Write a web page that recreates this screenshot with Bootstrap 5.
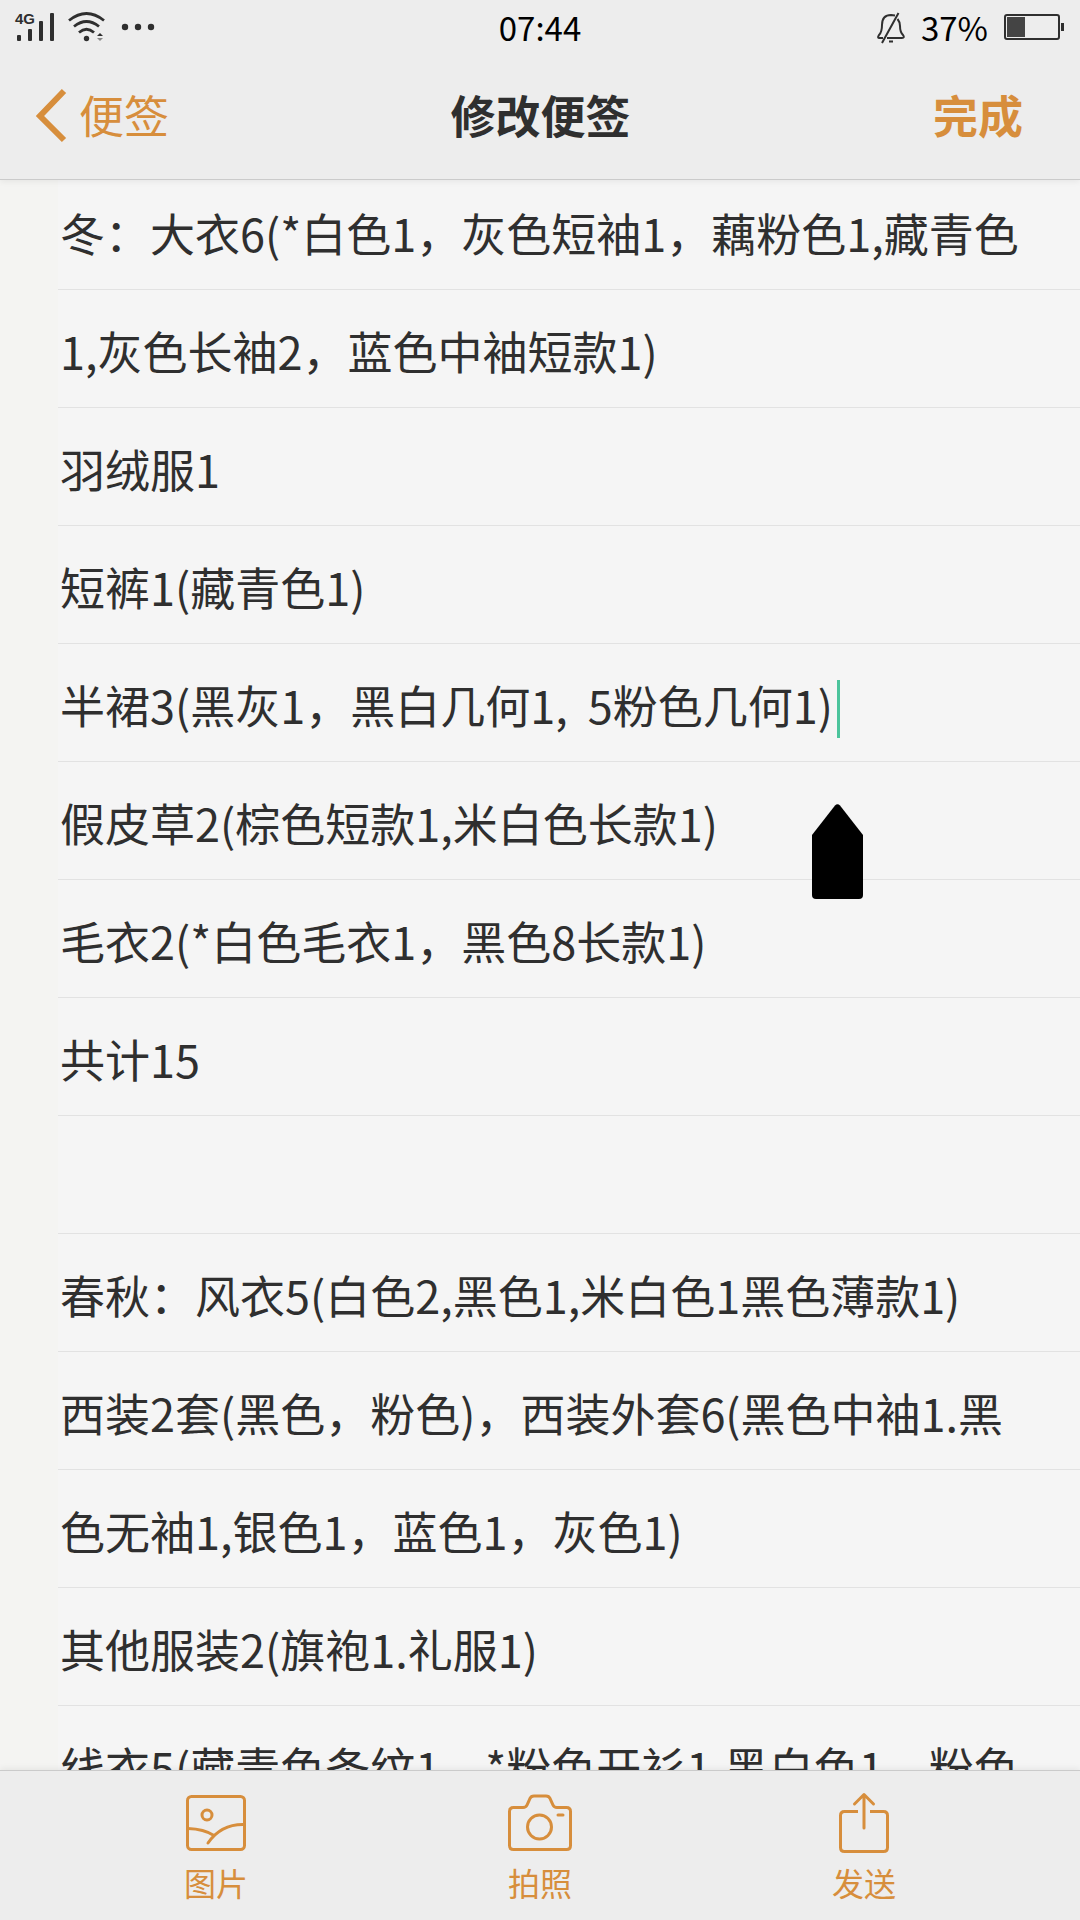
<!DOCTYPE html>
<html lang="zh-CN">
<head>
<meta charset="utf-8">
<meta name="viewport" content="width=device-width, initial-scale=1">
<title>修改便签</title>
<link rel="stylesheet" href="https://cdn.jsdelivr.net/npm/bootstrap@5.3.0/dist/css/bootstrap.min.css">
<style>
:root{--accent:#d78e3c;--ink:#2f2f2f;--bar:#ededed}
body{font-family:"Noto Sans CJK SC",sans-serif;color:var(--ink);background:#f5f5f5}
.screen{height:100vh}
.top-bars{background:var(--bar);border-bottom:1px solid #cbcbcb;box-shadow:0 2px 6px rgba(0,0,0,.06);z-index:2}
.status{height:54px;padding:0 16px;font-size:33px;line-height:54px;color:#000}
.status-side{flex:1 1 0}
.titlebar{height:125px;padding:0 57px 4px 34px;font-size:45px;line-height:60px}
.titlebar > *{flex:1 1 0}
.accent,.accent:hover{color:var(--accent)}
.plain-btn{background:none;border:0;padding:0}
.back{gap:11px}
.heading{font-size:45px;line-height:60px}
.note{overflow:hidden}
.note-text{
  display:block;width:100%;height:calc(100% + 8px);margin-top:-8px;padding:2px 46px 0 60px;
  border:0;outline:0;resize:none;overflow:hidden;color:var(--ink);
  font-size:45px;line-height:118px;
  background:
    linear-gradient(90deg,#f4f4f2 58px,transparent 58px),
    repeating-linear-gradient(#f5f5f5 0,#f5f5f5 117px,#e2e2e2 117px,#e2e2e2 118px);
}
.caret{left:837px;top:500px;width:3px;height:58px;background:#4cc49c}
.handle{left:812px;top:624px}
.tools{background:var(--bar);border-top:1px solid #cbcbcb;box-shadow:0 -2px 6px rgba(0,0,0,.06);height:150px;padding:21px 5% 0;z-index:2}
.tool{font-size:32px;line-height:40px;gap:8px}
svg{display:block;flex:none}
</style>
</head>
<body>
<div class="screen d-flex flex-column overflow-hidden">
  <header class="top-bars position-relative">
    <div class="status d-flex align-items-center">
      <div class="status-side d-flex align-items-center">
        <svg width="140" height="54" viewBox="16 0 140 54" role="img" aria-label="4G，无线网络" style="overflow:visible">
          <text x="15" y="24" font-family="Liberation Sans, sans-serif" font-weight="700" font-size="15" fill="#2f2f2f">4G</text>
          <g fill="#2f2f2f">
            <rect x="17" y="35" width="4" height="6" rx="1"/><rect x="28" y="29" width="4" height="12" rx="1"/>
            <rect x="39" y="21" width="4" height="20" rx="1"/><rect x="50" y="13" width="4" height="28" rx="1"/>
            <circle cx="86.500" cy="38.500" r="2.700"/>
            <path d="M97 36l3-3 3 3z"/><path d="M97 38l3 3 3-3z" fill="#888"/>
            <circle cx="125" cy="27" r="3.200"/><circle cx="138" cy="27" r="3.200"/><circle cx="151" cy="27" r="3.200"/>
          </g>
          <g fill="none" stroke="#2f2f2f" stroke-width="2.800">
            <path d="M69 20.500Q86.500 6.500 104 20.500"/><path d="M74 26.500Q86.500 16.500 99 26.500"/><path d="M79 32.500Q86.500 26 94 32.500"/>
          </g>
        </svg>
      </div>
      <div>07:44</div>
      <div class="status-side d-flex align-items-center justify-content-end">
        <svg width="28" height="54" viewBox="0 0 28 54" fill="none" stroke="#2f2f2f" stroke-width="2" role="img" aria-label="静音">
          <path d="M6 38H2.500Q0 38 2 35Q5 32 5 25Q5 15 14 15L18 15.500M20.500 19Q23 22 23 26Q23 32 26 35Q28 38 25 38H10M12 41.500h4M21.500 13L5 43"/>
        </svg>
        <span class="ms-3 me-3 ps-0">37%</span>
        <svg width="60" height="54" viewBox="0 0 60 54" role="img" aria-label="电池 37%">
          <rect x="1" y="15" width="54" height="24" rx="2" fill="none" stroke="#2f2f2f" stroke-width="2"/>
          <rect x="3" y="17" width="18" height="20" fill="#444"/><rect x="57" y="23" width="3" height="8" fill="#2f2f2f"/>
        </svg>
      </div>
    </div>
    <nav class="titlebar d-flex align-items-center">
      <div class="d-flex"><a href="#" class="back accent d-flex align-items-center text-decoration-none">
        <svg width="34" height="56" viewBox="0 0 34 56" fill="none" stroke="currentColor" stroke-width="6"><path d="M30 4L6 29L30 53"/></svg>便签</a></div>
      <h1 class="heading fw-bold text-center m-0 ps-4">修改便签</h1>
      <div class="d-flex justify-content-end"><button type="button" class="plain-btn accent fw-bold">完成</button></div>
    </nav>
  </header>

  <main class="note position-relative flex-grow-1">
    <textarea class="note-text" aria-label="便签内容" spellcheck="false">冬：大衣6(*白色1，灰色短袖1，藕粉色1,藏青色1,灰色长袖2，蓝色中袖短款1)
羽绒服1
短裤1(藏青色1)
半裙3(黑灰1，黑白几何1,  5粉色几何1)
假皮草2(棕色短款1,米白色长款1)
毛衣2(*白色毛衣1，黑色8长款1)
共计15

春秋：风衣5(白色2,黑色1,米白色1黑色薄款1)
西装2套(黑色，粉色)，西装外套6(黑色中袖1.黑色无袖1,银色1，蓝色1，灰色1)
其他服装2(旗袍1.礼服1)
线衣5(藏青色条纹1，*粉色开衫1,黑白色1，粉色</textarea>
    <div class="caret position-absolute"></div>
    <svg class="handle position-absolute" width="51" height="95" viewBox="0 0 51 95"><path d="M23 1.500Q25.500-1 28 1.500L51 31V91Q51 95 47 95H4Q0 95 0 91V31Z"/></svg>
  </main>

  <footer class="tools position-relative">
    <div class="row g-0">
      <div class="col-4 d-flex justify-content-center">
        <button type="button" class="tool plain-btn accent d-flex flex-column align-items-center">
          <svg width="64" height="62" viewBox="0 0 64 62" fill="none" stroke="currentColor" stroke-width="3" stroke-linecap="round"><rect x="3.500" y="4.500" width="57" height="53" rx="4"/><circle cx="23" cy="23" r="5"/><path d="M4 36.500Q20 37 30 43.500M24 51Q37 32 60 32.500"/></svg>
          <span>图片</span></button>
      </div>
      <div class="col-4 d-flex justify-content-center">
        <button type="button" class="tool plain-btn accent d-flex flex-column align-items-center">
          <svg width="64" height="62" viewBox="0 0 64 62" fill="none" stroke="currentColor" stroke-width="3" stroke-linecap="round"><path d="M5.500 15.500H15Q18 15.500 19 13L22 6.500Q23 4 26 4H38Q41 4 42 6.500L45 13Q46 15.500 49 15.500H58.500Q62.500 15.500 62.500 19.500V53.500Q62.500 57.500 58.500 57.500H5.500Q1.500 57.500 1.500 53.500V19.500Q1.500 15.500 5.500 15.500Z"/><circle cx="31.500" cy="35" r="12"/><path d="M50 23h5"/></svg>
          <span>拍照</span></button>
      </div>
      <div class="col-4 d-flex justify-content-center">
        <button type="button" class="tool plain-btn accent d-flex flex-column align-items-center">
          <svg width="64" height="62" viewBox="0 0 64 62" fill="none" stroke="currentColor" stroke-width="3"><path d="M26 19.500H12.500Q8.500 19.500 8.500 23.500V55.500Q8.500 59.500 12.500 59.500H51.500Q55.500 59.500 55.500 55.500V23.500Q55.500 19.500 51.500 19.500H38"/><path d="M32 36V2.500M22.500 12L32 2.500L41.500 12" stroke-linecap="round" stroke-linejoin="round"/></svg>
          <span>发送</span></button>
      </div>
    </div>
  </footer>
</div>
<script src="https://cdn.jsdelivr.net/npm/bootstrap@5.3.0/dist/js/bootstrap.bundle.min.js"></script>
</body>
</html>
